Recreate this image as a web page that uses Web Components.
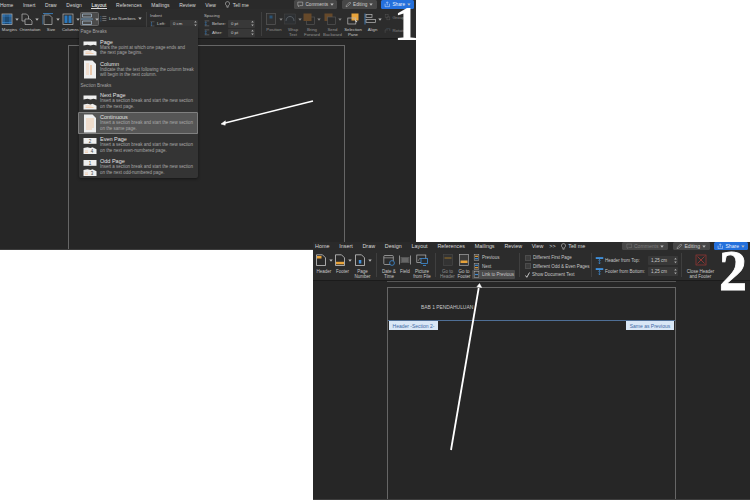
<!DOCTYPE html>
<html>
<head>
<meta charset="utf-8">
<title>Section breaks</title>
<style>
  html, body { margin: 0; height: 100%; background: #fff; overflow: hidden; }
  body { position: relative; width: 750px; height: 500px; font-family: "Liberation Sans", Arial, sans-serif; }
</style>
</head>
<body>

<word-window style="left:0;top:0;width:416px;height:250px;--fs:5px;--label:4.3px;--tabs:9px;--ribbon:29px;--lblgap:1px">
  <ribbon-tabs slot="tabs" tabs="Home,Insert,Draw,Design,Layout,References,Mailings,Review,View" active="Layout" start="-2" gap="9.6" tell="9">
    <pill-btn icon="comment" w="43">Comments</pill-btn>
    <pill-btn icon="pencil" w="35">Editing</pill-btn>
    <pill-btn icon="share" w="33" kind="primary">Share</pill-btn>
  </ribbon-tabs>
  <ribbon-bar slot="ribbon" start="-1">
    <rb-btn w="19" icon="margins" arrow>Margins</rb-btn>
    <rb-btn w="22" icon="orient" arrow>Orientation</rb-btn>
    <rb-btn w="20" icon="size" arrow>Size</rb-btn>
    <rb-btn w="19" icon="columns" arrow>Columns</rb-btn>
    <rb-btn w="19" icon="breaks" arrow active></rb-btn>
    <rb-small w="44.5" icon="linenum" arrow top="5">Line Numbers</rb-small>
    <rb-sep></rb-sep>
    <rb-group w="54" title="Indent"><rb-field label="Left:" value="0 cm" lw="20" bw="28"></rb-field></rb-group>
    <rb-group w="54" title="Spacing">
      <rb-field label="Before:" value="0 pt" lw="24" bw="27" icon></rb-field>
      <rb-field label="After:" value="0 pt" lw="24" bw="27" icon></rb-field>
    </rb-group>
    <rb-sep></rb-sep>
    <rb-btn w="19" icon="position" arrow dim>Position</rb-btn>
    <rb-btn w="19" icon="wrap" arrow dim>Wrap<br>Text</rb-btn>
    <rb-btn w="19" icon="forward" arrow dim>Bring<br>Forward</rb-btn>
    <rb-btn w="22" icon="backward" arrow dim>Send<br>Backward</rb-btn>
    <rb-btn w="19" icon="selection">Selection<br>Pane</rb-btn>
    <rb-btn w="20" icon="align" arrow>Align</rb-btn>
    <rb-stack w="30" gap="4">
      <rb-small w="30" icon="group" dim>Group</rb-small>
      <rb-small w="30" icon="rotate" dim>Rotate</rb-small>
    </rb-stack>
  </ribbon-bar>
  <doc-page slot="doc" left="68" top="6" width="277"></doc-page>
</word-window>

<break-menu style="left:79px;top:27px;width:119px;height:151px">
  <menu-head>Page Breaks</menu-head>
  <break-item kind="page" title="Page">Mark the point at which one page ends and<br>the next page begins.</break-item>
  <break-item kind="column" title="Column">Indicate that the text following the column break<br>will begin in the next column.</break-item>
  <menu-head>Section Breaks</menu-head>
  <break-item kind="page" title="Next Page">Insert a section break and start the new section<br>on the next page.</break-item>
  <break-item kind="continuous" title="Continuous" active>Insert a section break and start the new section<br>on the same page.</break-item>
  <break-item kind="even" title="Even Page">Insert a section break and start the new section<br>on the next even-numbered page.</break-item>
  <break-item kind="odd" title="Odd Page">Insert a section break and start the new section<br>on the next odd-numbered page.</break-item>
</break-menu>

<word-window style="left:313px;top:242px;width:437px;height:258px;--fs:5.4px;--label:4.5px;--tabs:8px;--ribbon:30px;--lblgap:2px">
  <ribbon-tabs slot="tabs" tabs="Home,Insert,Draw,Design,Layout,References,Mailings,Review,View" active="" start="2" gap="9.8" more tell="5">
    <pill-btn icon="comment" w="46" dim>Comments</pill-btn>
    <pill-btn icon="pencil" w="37">Editing</pill-btn>
    <pill-btn icon="share" w="34" kind="primary">Share</pill-btn>
  </ribbon-tabs>
  <ribbon-bar slot="ribbon" start="2">
    <rb-btn w="18" icon="header" arrow>Header</rb-btn>
    <rb-btn w="19" icon="footer" arrow>Footer</rb-btn>
    <rb-btn w="21" icon="pagenum" arrow>Page<br>Number</rb-btn>
    <rb-sep></rb-sep>
    <rb-btn w="19" icon="date">Date &amp;<br>Time</rb-btn>
    <rb-btn w="13" icon="field">Field</rb-btn>
    <rb-btn w="21" icon="picture">Picture<br>from File</rb-btn>
    <rb-sep></rb-sep>
    <rb-btn w="17" icon="gohead" dim>Go to<br>Header</rb-btn>
    <rb-btn w="16" icon="gofoot">Go to<br>Footer</rb-btn>
    <rb-stack w="44" gap="0" ptop="3.3">
      <rb-small w="43" icon="prev" h="8.5">Previous</rb-small>
      <rb-small w="43" icon="next" h="8.5">Next</rb-small>
      <rb-small w="43" icon="link" h="8.5" active>Link to Previous</rb-small>
    </rb-stack>
    <rb-sep></rb-sep>
    <rb-stack w="66" gap="0" pad="2" ptop="3.3">
      <rb-check>Different First Page</rb-check>
      <rb-check>Different Odd &amp; Even Pages</rb-check>
      <rb-check checked>Show Document Text</rb-check>
    </rb-stack>
    <rb-sep></rb-sep>
    <rb-stack w="83" gap="2" ptop="5.500">
      <rb-field label="Header from Top:" value="1,25 cm" lw="53" bw="30" icon="big"></rb-field>
      <rb-field label="Footer from Bottom:" value="1,25 cm" lw="53" bw="30" icon="big"></rb-field>
    </rb-stack>
    <rb-sep></rb-sep>
    <rb-btn w="32" icon="close">Close Header<br>and Footer</rb-btn>
  </ribbon-bar>
  <doc-page slot="doc" left="74" top="6" width="289" rule>
    <header-zone text="BAB 1 PENDAHULUAN" tag="Header -Section 2-" same="Same as Previous"></header-zone>
  </doc-page>
</word-window>

<note-arrows></note-arrows>
<step-number style="left:394px;top:7px;font-size:49px;line-height:33px">1</step-number>
<step-number style="left:719px;top:252px;font-size:56px;line-height:38px;-webkit-text-stroke:.8px #fff">2</step-number>

<script>
const FONT = '"Liberation Sans", Arial, sans-serif';
const BLUE = '#3f8ed8', ORANGE = '#e8a33a', LINE = '#b9b9b9';

// ribbon glyphs, all on a 12x12 box
const icons = {
  margins: `<rect x="1" y="1" width="10" height="10.5" fill="#1d4a73" stroke="${LINE}" stroke-width=".7"/><path d="M3 1v10.5M9 1v10.5M1 3h10M1 9.5h10" stroke="${BLUE}" stroke-width=".6"/>`,
  orient: `<path d="M1 1h4.5l2 2v5H1z" fill="none" stroke="${LINE}" stroke-width=".7"/><path d="M4 6h5l2 2v3.5H4z" fill="#2b2b2b" stroke="${LINE}" stroke-width=".7"/>`,
  size: `<path d="M2 2h5.5l2.5 2.500V11.500H2z" fill="none" stroke="${LINE}" stroke-width=".7"/><path d="M1 .6h10" stroke="${BLUE}" stroke-width=".8"/><path d="M.7 2v9.500" stroke="${BLUE}" stroke-width=".5"/>`,
  columns: `<rect x="1" y="1" width="10" height="10.500" fill="none" stroke="${LINE}" stroke-width=".7"/><rect x="2.500" y="2.500" width="3" height="7.500" fill="#2a78bd"/><rect x="6.500" y="2.500" width="3" height="7.500" fill="#2a78bd"/>`,
  breaks: `<path d="M1.500 1h9v3h-9zM1.500 8h9v3.500h-9z" fill="none" stroke="#9fb4c7" stroke-width=".8"/><path d="M0 6h12" stroke="#6fa3cf" stroke-width=".8"/>`,
  linenum: `<path d="M1.500 2v2M1.500 5.500v2M1.500 9v2" stroke="${BLUE}" stroke-width="1"/><path d="M4 2.500h7M4 6h7M4 9.500h7" stroke="${LINE}" stroke-width=".8"/>`,
  position: `<rect x="1.500" y=".5" width="9" height="11" fill="#333" stroke="#777" stroke-width=".7"/><rect x="4.500" y="2.500" width="3" height="3" fill="#2a6aa0"/>`,
  wrap: `<rect x=".5" y="1" width="11" height="10" fill="#2f3338" stroke="#555" stroke-width=".5"/><path d="M2 8c0-6 8-6 8 0" fill="none" stroke="#7f8a96" stroke-width=".8"/>`,
  forward: `<rect x="3.500" y="4" width="8" height="7.500" fill="#2b2b2b" stroke="#777" stroke-width=".6"/><rect x=".5" y=".5" width="8" height="7.500" fill="#8a5c2a"/>`,
  backward: `<rect x=".5" y=".5" width="8" height="7.500" fill="#8a5c2a"/><rect x="3.500" y="4" width="8" height="7.500" fill="#2b2b2b" stroke="#777" stroke-width=".6"/>`,
  selection: `<rect x="4.500" y=".5" width="7" height="7" fill="${ORANGE}"/><rect x=".8" y="5" width="8" height="6" fill="none" stroke="${LINE}" stroke-width=".7"/><path d="M7.500 6l3 3-1.500.2.800 1.800" fill="#ddd"/>`,
  align: `<path d="M1 .5v11" stroke="${BLUE}" stroke-width=".8"/><rect x="2" y="1.500" width="6" height="3" fill="none" stroke="${LINE}" stroke-width=".7"/><rect x="2" y="6.500" width="9.500" height="3" fill="none" stroke="${LINE}" stroke-width=".7"/>`,
  group: `<rect x="2" y="1" width="5" height="5" fill="none" stroke="#777" stroke-width=".8"/><rect x="5" y="5" width="5" height="5" fill="none" stroke="#777" stroke-width=".8"/>`,
  rotate: `<path d="M2 10V5h5M10 2v5" fill="none" stroke="#777" stroke-width=".9"/><path d="M3 4c2-2 5-2 7 0" fill="none" stroke="#5a7f9f" stroke-width=".8"/>`,
  header: `<path d="M1.500 .8h6l3 3v7.700h-9z" fill="#2b2b2b" stroke="#ddd" stroke-width=".7"/><path d="M2 2h4.500v2.500H2z" fill="${ORANGE}"/>`,
  footer: `<path d="M1.500 .8h6l3 3v7.700h-9z" fill="#2b2b2b" stroke="#ddd" stroke-width=".7"/><rect x="2" y="7.800" width="8" height="2.500" fill="${ORANGE}"/>`,
  pagenum: `<path d="M1.500 .8h6l3 3v7.700h-9z" fill="#2b2b2b" stroke="#ddd" stroke-width=".7"/><rect x="4.800" y="6" width="2.500" height="3.500" fill="${BLUE}"/>`,
  date: `<rect x=".8" y="1.500" width="9.500" height="9" rx="1" fill="none" stroke="${LINE}" stroke-width=".7"/><path d="M.8 3.800h9.500" stroke="${LINE}" stroke-width=".6"/><circle cx="9" cy="9" r="2.400" fill="#2b2b2b" stroke="${BLUE}" stroke-width=".8"/>`,
  field: `<rect x="1.500" y="3" width="9" height="6" fill="#555"/><path d="M.5 1.500v9M11.500 1.500v9" stroke="${LINE}" stroke-width=".7"/><path d="M3 5h6M3 7h6" stroke="#999" stroke-width=".5"/>`,
  picture: `<rect x=".8" y="1" width="9" height="7.500" fill="none" stroke="${LINE}" stroke-width=".7"/><path d="M2 7l2-3 2 2" fill="none" stroke="${LINE}" stroke-width=".5"/><rect x="5" y="4.500" width="6.500" height="5" fill="#2b2b2b" stroke="${BLUE}" stroke-width=".8"/><path d="M7 11.500h3" stroke="${BLUE}" stroke-width=".8"/>`,
  gohead: `<rect x="1.500" y=".5" width="9" height="11" fill="#383838" stroke="#5c5c5c" stroke-width=".6"/><rect x="2.500" y="3" width="7" height="2" fill="#8a6a2f"/>`,
  gofoot: `<rect x="1.500" y=".5" width="9" height="11" fill="#3a3a3a" stroke="${LINE}" stroke-width=".6"/><rect x="2.500" y="6.500" width="7" height="2.500" fill="${ORANGE}"/>`,
  prev: `<rect x="2" y="1" width="8" height="10" fill="#333" stroke="${LINE}" stroke-width=".8"/><rect x="3.500" y="3" width="5" height="2" fill="${ORANGE}"/><rect x="3.500" y="7" width="5" height="2" fill="${BLUE}"/>`,
  next: `<rect x="2" y="1" width="8" height="10" fill="#333" stroke="${LINE}" stroke-width=".8"/><rect x="3.500" y="3" width="5" height="2" fill="${BLUE}"/><rect x="3.500" y="7" width="5" height="2" fill="${ORANGE}"/>`,
  link: `<rect x="2" y="1" width="8" height="10" fill="#333" stroke="${LINE}" stroke-width=".8"/><rect x="3.500" y="5" width="5" height="2" fill="${BLUE}"/>`,
  close: `<rect x="1" y="1" width="10" height="10" fill="none" stroke="#b23a36" stroke-width=".6"/><path d="M2.500 2.500l7 7M9.500 2.500l-7 7" stroke="#d0403a" stroke-width=".6"/>`,
  top: `<rect x="1" y="1.500" width="10" height="2.500" fill="${BLUE}"/><path d="M6 4.500v6M4.500 8.800L6 10.500 7.500 8.800M4.500 6.200L6 4.500 7.500 6.200" fill="none" stroke="${BLUE}" stroke-width=".8"/>`,
  small: `<path d="M1 1.500h8M1 10h8" stroke="#999" stroke-width=".7"/><path d="M3 3v6M1.800 4.300L3 3 4.200 4.300M1.800 7.700L3 9 4.200 7.700" fill="none" stroke="${BLUE}" stroke-width=".8"/>`,
  comment: `<path d="M1.500 2h9v6.500H5L3 10.500V8.500H1.500z" fill="none" stroke="currentColor" stroke-width=".9"/>`,
  pencil: `<path d="M2 10.500l.7-2.700 6-6 2 2-6 6z" fill="none" stroke="currentColor" stroke-width=".9"/>`,
  share: `<path d="M2 5v5.500h8V5M6 8V1.500M4 3.500l2-2 2 2" fill="none" stroke="currentColor" stroke-width=".9"/>`,
  bulb: `<path d="M6 1a3.500 3.500 0 0 0-2 6.400V9h4V7.400A3.500 3.500 0 0 0 6 1zM4.500 10.800h3" fill="none" stroke="currentColor" stroke-width=".9"/>`
};

const svg = (name, size) => `<svg width="${size}" height="${size}" viewBox="0 0 12 12" style="display:block;flex:none">${icons[name]}</svg>`;
const caret = `<svg width="4" height="3" viewBox="0 0 4 3" style="display:block;flex:none"><path d="M.3.5h3.400L2 2.700z" fill="#bbb"/></svg>`;

// little helper so each element is just css + markup
class Shadowed extends HTMLElement {
  connectedCallback() {
    if (this.shadowRoot) return;
    const root = this.attachShadow({mode: 'open'});
    root.innerHTML = `<style>${this.css()}</style>${this.html()}`;
  }
  num(name, fallback) {
    return this.hasAttribute(name) ? Number(this.getAttribute(name)) : fallback;
  }
}

class WordWindow extends Shadowed {
  css() { return `
    :host { position: absolute; display: flex; flex-direction: column; overflow: hidden;
            background: #262626; color: #cfcfcf; font-family: ${FONT}; border-bottom: 1px solid #3d3d3d; box-sizing: border-box; }
    .tabs { height: var(--tabs); flex: none; background: #2a2a2a; }
    .ribbon { height: var(--ribbon); flex: none; background: #2c2c2c; border-bottom: 1px solid #1b1b1b; }
    .doc { flex: 1; min-height: 0; overflow: hidden; }`; }
  html() { return `<div class="tabs"><slot name="tabs"></slot></div>
    <div class="ribbon"><slot name="ribbon"></slot></div>
    <div class="doc"><slot name="doc"></slot></div>`; }
}

class RibbonTabs extends Shadowed {
  css() { return `
    :host { display: flex; align-items: center; height: 100%; white-space: nowrap; font-size: var(--fs); color: #d8d8d8; padding-left: ${this.num('start', 0)}px; }
    .tabs { display: flex; align-items: center; gap: ${this.num('gap', 10)}px; }
    .on { color: #fff; box-shadow: 0 1px 0 #ddd; }
    .tell { display: flex; align-items: center; gap: 1.500px; margin-left: ${this.num('tell', 6) - this.num('gap', 10) + 9}px; }
    .more { margin-left: -4px; }
    .right { display: flex; gap: 4.500px; margin-left: auto; padding-right: 2px; align-items: center; }`; }
  html() {
    const active = this.getAttribute('active');
    const tabs = this.getAttribute('tabs').split(',')
      .map(t => `<span class="${t === active ? 'on' : ''}">${t}</span>`).join('');
    const more = this.hasAttribute('more') ? '<span class="more">&gt;&gt;</span>' : '';
    return `<div class="tabs">${tabs}${more}</div>
      <div class="tell">${svg('bulb', 7)}<span>Tell me</span></div>
      <div class="right"><slot></slot></div>`;
  }
}

class PillBtn extends Shadowed {
  css() {
    const primary = this.getAttribute('kind') === 'primary';
    const dim = this.hasAttribute('dim');
    return `
    :host { display: flex; align-items: center; justify-content: center; gap: 1.500px; height: 8.500px; width: ${this.num('w', 30)}px;
            border-radius: 1.500px; font-size: calc(var(--fs) - .3px); background: ${primary ? '#2470dc' : '#474747'};
            color: ${primary ? '#eaf2ff' : dim ? '#7d7d7d' : '#cfcfcf'}; box-sizing: border-box; }`;
  }
  html() { return `${svg(this.getAttribute('icon'), 6.500)}<slot></slot>${caret}`; }
}

class RibbonBar extends Shadowed {
  css() { return `:host { display: flex; align-items: flex-start; height: 100%; white-space: nowrap; padding-left: ${this.num('start', 0)}px; }`; }
  html() { return `<slot></slot>`; }
}

class RbBtn extends Shadowed {
  css() {
    const active = this.hasAttribute('active');
    return `
    :host { display: flex; flex-direction: column; align-items: center; flex: none; width: ${this.num('w', 20)}px; padding-top: 3px;
            box-sizing: border-box; ${this.hasAttribute('dim') ? 'opacity: .62;' : ''} }
    .top { display: flex; align-items: center; gap: 2px; height: 14px; padding: 0 1px; border-radius: 1.500px;
           ${active ? 'background: #4b4b4b; border: .5px solid #666; box-sizing: border-box; width: 19px; justify-content: center;' : ''} }
    .lbl { font-size: var(--label); line-height: 5px; text-align: center; color: #c8c8c8; margin-top: var(--lblgap, 2px); }`;
  }
  html() {
    return `<div class="top">${svg(this.getAttribute('icon'), 12)}${this.hasAttribute('arrow') ? caret : ''}</div>
      <div class="lbl"><slot></slot></div>`;
  }
}

class RbSmall extends Shadowed {
  css() {
    const active = this.hasAttribute('active');
    return `
    :host { display: flex; align-items: center; gap: 2px; flex: none; width: ${this.num('w', 40)}px; height: ${this.num('h', 9)}px;
            margin-top: ${this.num('top', 0)}px; font-size: var(--label); color: #c8c8c8; box-sizing: border-box; padding-left: 1px;
            ${active ? 'background: #4a4a4a; border-radius: 1px;' : ''} ${this.hasAttribute('dim') ? 'opacity: .55;' : ''} }`;
  }
  html() { return `${svg(this.getAttribute('icon'), 7)}<span><slot></slot></span>${this.hasAttribute('arrow') ? caret : ''}`; }
}

class RbStack extends Shadowed {
  css() { return `:host { display: flex; flex-direction: column; flex: none; width: ${this.num('w', 40)}px; gap: ${this.num('gap', 1)}px;
    padding: ${this.num('ptop', 3.5)}px 0 0 ${this.num('pad', 0)}px; box-sizing: border-box; }`; }
  html() { return `<slot></slot>`; }
}

class RbSep extends Shadowed {
  css() { return `:host { display: block; flex: none; width: 1px; height: 24px; margin: 3px 3px 0 2.500px; background: #3f3f3f; }`; }
  html() { return ``; }
}

class RbGroup extends Shadowed {
  css() { return `
    :host { display: flex; flex-direction: column; flex: none; width: ${this.num('w', 50)}px; padding-top: 3.500px; gap: 1px; box-sizing: border-box; }
    .t { font-size: var(--label); line-height: 5px; color: #bbb; margin-bottom: 1px; }`; }
  html() { return `<div class="t">${this.getAttribute('title')}</div><slot></slot>`; }
}

class RbField extends Shadowed {
  css() {
    const big = this.getAttribute('icon') === 'big';
    return `
    :host { display: flex; align-items: center; height: ${big ? 9 : 8}px; font-size: var(--label); color: #c8c8c8; }
    .l { display: flex; align-items: center; gap: 1px; flex: none; width: ${this.num('lw', 20)}px; }
    .b { display: flex; align-items: center; justify-content: space-between; flex: none; width: ${this.num('bw', 26)}px; height: 100%;
         background: #383838; border-radius: 1px; padding: 0 1.500px 0 3px; box-sizing: border-box; }`;
  }
  html() {
    const mode = this.getAttribute('icon');
    const pic = mode === null ? svg('small', 6) : mode === 'big' ? svg('top', 9) : svg('small', 7);
    const step = `<svg width="3" height="7" viewBox="0 0 3 7"><path d="M.2 2.600L1.500.8l1.300 1.800zM.2 4.400l1.300 1.800 1.300-1.800z" fill="#aaa"/></svg>`;
    return `<div class="l">${pic}<span>${this.getAttribute('label')}</span></div>
      <div class="b"><span>${this.getAttribute('value')}</span>${step}</div>`;
  }
}

class RbCheck extends Shadowed {
  css() { return `
    :host { display: flex; align-items: center; gap: 2.500px; height: 8.500px; font-size: var(--label); color: #c8c8c8; }
    .box { width: 4px; height: 4px; flex: none; background: #3c3c3c; border: .5px solid #4c4c4c; }
    .tick { width: 5px; height: 6px; flex: none; }`; }
  html() {
    const mark = this.hasAttribute('checked')
      ? `<svg class="tick" viewBox="0 0 5 6"><path d="M.5 3.500L1.800 5.300 4.500.5" fill="none" stroke="#eee" stroke-width=".8"/></svg>`
      : `<div class="box"></div>`;
    return `${mark}<span><slot></slot></span>`;
  }
}

class DocPage extends Shadowed {
  css() { return `
    :host { display: block; height: 100%; padding: ${this.num('top', 6)}px 0 0 ${this.num('left', 68)}px; box-sizing: border-box; position: relative; }
    .page { width: ${this.num('width', 278)}px; height: 600px; border: 1px solid #666; box-sizing: border-box; }
    .rule { position: absolute; left: ${this.num('left', 68)}px; top: 0; width: ${this.num('width', 278)}px; height: 1px; background: #555; }`; }
  html() { return `${this.hasAttribute('rule') ? '<div class="rule"></div>' : ''}<div class="page"><slot></slot></div>`; }
}

class HeaderZone extends Shadowed {
  css() { return `
    :host { display: block; height: 33px; box-sizing: border-box; border-bottom: 1px solid #4f6f96; position: relative; padding: 17px 0 0 33px;
            font-size: 4.900px; color: #c9c9c9; }
    .tag { position: absolute; top: 33px; height: 9px; display: flex; align-items: center; justify-content: center;
           background: #d9e7f6; color: #3d6aa5; font-size: 5px; box-sizing: border-box; }
    .a { left: 1px; width: 49px; }
    .b { right: 1px; width: 48px; }`; }
  html() { return `<span>${this.getAttribute('text')}</span>
    <div class="tag a">${this.getAttribute('tag')}</div>
    <div class="tag b">${this.getAttribute('same')}</div>`; }
}

class BreakMenu extends Shadowed {
  css() { return `
    :host { position: absolute; display: flex; flex-direction: column; background: #343434; font-family: ${FONT};
            border-radius: 0 0 2px 2px; box-shadow: 0 1px 3px rgba(0,0,0,.45); overflow: visible; color: #d0d0d0; }`; }
  html() { return `<slot></slot>`; }
}

class MenuHead extends Shadowed {
  css() { return `:host { display: flex; align-items: center; height: 9.500px; padding-left: 1.500px; font-size: 4.600px; color: #a2a2a2; }`; }
  html() { return `<slot></slot>`; }
}

const sheet = (inner, h) => `<svg width="14" height="${h}" viewBox="0 0 14 ${h}" style="display:block">${inner}</svg>`;
const peach = '#f2c6a2';
const numbered = (a, b) => sheet(`<path d="M.5 1h13v5.800H.5z" fill="#efefef"/><text x="7" y="5.500" font-size="4.500" font-family="Liberation Sans" text-anchor="middle" fill="#444">${a}</text>
  <path d="M.5 11l4-.8 3 .8 2-.8 4 2v4.800H.5z" fill="#efefef"/><path d="M2 14h3M2 15.500h3" stroke="${peach}" stroke-width=".7"/><text x="9" y="15.800" font-size="4.500" font-family="Liberation Sans" text-anchor="middle" fill="#444">${b}</text>`, 17);
const breakIcons = {
  page: () => sheet(`<path d="M.5 3.500h13v4l-3-.8-3 .8-3-.8-4 .8z" fill="#efefef"/><path d="M.5 12.500l4-.8 3 .8 2-.8 4 2v3.800H.5z" fill="#efefef"/><path d="M2.500 14h6M2.500 15.500h8" stroke="${peach}" stroke-width=".8"/>`, 19),
  column: () => sheet(`<path d="M1 .5h8.500l3.500 3.500v14.500H1z" fill="#efefef"/><path d="M3 4h3M3 6h3M3 8h3M3 10h3M3 12h3M3 14h3" stroke="${peach}" stroke-width=".8"/><path d="M8 5v10" stroke="#e49a5c" stroke-width=".9"/>`, 19),
  continuous: () => sheet(`<path d="M1 .5h8.500l3.500 3.500v14.500H1z" fill="#efefef"/><path d="M3 5h8M3 7h8M3 9h8M3 11h8M3 13h8M3 15h6" stroke="${peach}" stroke-width=".9"/>`, 19),
  even: () => numbered('2', '4'),
  odd: () => numbered('1', '3')
};

class BreakItem extends Shadowed {
  css() {
    const active = this.hasAttribute('active');
    return `
    :host { display: flex; align-items: center; height: 22px; flex: none; box-sizing: border-box; padding-left: 4px; gap: 3px; position: relative; }
    ${active ? `:host { background: #565656; box-shadow: inset 0 0 0 .7px #8e8e8e; border-radius: 1.500px; margin-left: -1px; padding-left: 5px; }` : ''}
    .pic { width: 14px; flex: none; }
    .t { font-size: 5.500px; line-height: 6px; color: #e2e2e2; }
    .d { font-size: 4.450px; line-height: 5.500px; color: #a8a8a8; white-space: nowrap; }
    .txt { margin-top: -1px; }`;
  }
  html() {
    return `<div class="pic">${breakIcons[this.getAttribute('kind')]()}</div>
      <div class="txt"><div class="t">${this.getAttribute('title')}</div><div class="d"><slot></slot></div></div>`;
  }
}

class NoteArrows extends Shadowed {
  css() { return `:host { position: absolute; left: 0; top: 0; width: 750px; height: 500px; pointer-events: none; display: block; }`; }
  html() { return `<svg width="750" height="500" viewBox="0 0 750 500" style="display:block">
    <path d="M313 101L224 123.300" stroke="#fff" stroke-width="1.500"/>
    <path d="M221 124l4.400-3.200-.2 4.400z" fill="#fff" stroke="#fff" stroke-width=".5"/>
    <path d="M451 450L478.700 288" stroke="#fff" stroke-width="1.800"/>
    <path d="M479.500 283.500l2.200 4-4.800-.8z" fill="#fff" stroke="#fff" stroke-width=".5"/>
  </svg>`; }
}

class StepNumber extends Shadowed {
  css() { return `:host { position: absolute; display: block; color: #fff; font-family: "Liberation Serif", "Times New Roman", serif; font-weight: 700; }`; }
  html() { return `<slot></slot>`; }
}

const elements = {
  'word-window': WordWindow, 'ribbon-tabs': RibbonTabs, 'pill-btn': PillBtn, 'ribbon-bar': RibbonBar,
  'rb-btn': RbBtn, 'rb-small': RbSmall, 'rb-stack': RbStack, 'rb-sep': RbSep, 'rb-group': RbGroup,
  'rb-field': RbField, 'rb-check': RbCheck, 'doc-page': DocPage, 'header-zone': HeaderZone,
  'break-menu': BreakMenu, 'menu-head': MenuHead, 'break-item': BreakItem,
  'note-arrows': NoteArrows, 'step-number': StepNumber
};
Object.keys(elements).forEach(name => customElements.define(name, elements[name]));
</script>
</body>
</html>
